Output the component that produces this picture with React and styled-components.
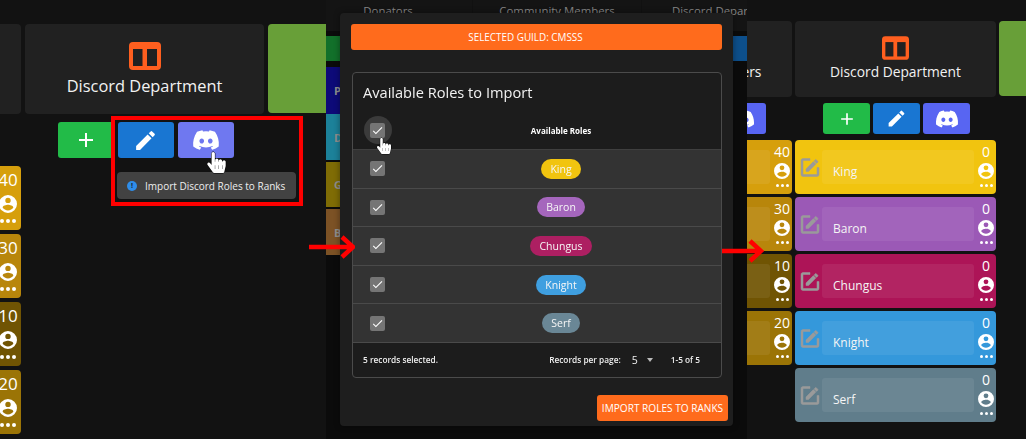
import React from "react";
import styled, { createGlobalStyle } from "styled-components";
import { FaDiscord, FaHandPointer } from "react-icons/fa";
import { MdEdit, MdAdd, MdCheck } from "react-icons/md";

const Global = createGlobalStyle`
  html, body { margin: 0; padding: 0; background: #121212; overflow: hidden; }
  #root { width: 1026px; height: 439px; }
  * { box-sizing: border-box; }
`;

const Page = styled.div`
  position: relative; width: 1026px; height: 439px; display: flex; overflow: hidden;
  font-family: "Open Sans", "Noto Sans", sans-serif; color: #fff; background: #121212;
`;

const Board = styled.section`
  width: ${p => p.$width}px; height: 100%; flex: none; display: flex; gap: ${p => p.$gap}px;
  padding-top: ${p => p.$top}px; overflow: hidden; background: #121212;
  justify-content: flex-start;
`;

const Column = styled.div`
  width: ${p => p.$visible}px; flex: none; display: flex; flex-direction: column;
  align-items: flex-end; overflow: hidden; position: relative;
`;

const ColumnInner = styled.div`
  width: ${p => p.$width}px; flex: none; display: flex; flex-direction: column; align-items: stretch;
`;

const Header = styled.div`
  height: ${p => p.$h}px; background: #212121; border-radius: 4px; display: flex; flex-direction: column;
  align-items: center; justify-content: flex-end; padding-bottom: ${p => p.$big ? 18 : 16}px;
  gap: ${p => p.$big ? 5 : 3}px;
  font-size: ${p => p.$big ? 16.4 : 13.8}px; line-height: 1.3; white-space: nowrap; color: #f2f2f2;
`;

const GreenHeader = styled.div`
  height: ${p => p.$h}px; background: #689f38; border-radius: 4px 0 0 4px; flex: none;
  width: ${p => p.$w}px;
`;

const ButtonRow = styled.div`
  display: flex; justify-content: center; gap: ${p => p.$big ? 4 : 3}px; padding-left: 2px;
  margin-top: ${p => p.$big ? 8 : 6}px; height: ${p => p.$big ? 36 : 31}px;
`;

const ActionButton = styled.div`
  width: ${p => p.$big ? 56 : 47}px; height: 100%; border-radius: 3px; background: ${p => p.$bg};
  display: flex; align-items: center; justify-content: center; color: #fff;
`;

const Ranks = styled.div`
  display: flex; flex-direction: column; gap: ${p => p.$big ? 4 : 3}px;
  margin-top: ${p => p.$gapTop ? p.$gapTop : p.$big ? 8 : 6}px;
`;

const RankCard = styled.div`
  height: ${p => p.$big ? 64 : 54}px; background: ${p => p.$bg}; border-radius: 4px; display: flex;
  align-items: stretch; position: relative;
`;

const EditSlot = styled.div`
  width: 27px; flex: none; display: flex; align-items: center; justify-content: center;
  padding-left: 3px; color: #9a9a9a;
  svg { stroke: currentColor; stroke-width: .5px; }
`;

const RankName = styled.div`
  flex: 1; margin: 10px 0; background: rgba(255,255,255,.07); border-radius: 3px; display: flex;
  align-items: center; padding: 9px 0 0 11px; font-size: 12px; color: #f5f5f5;
`;

const RankSide = styled.div`
  width: ${p => p.$big ? 26 : 22}px; flex: none; display: flex; flex-direction: column; align-items: center;
  padding-top: 3px; padding-left: ${p => p.$big ? 0 : 2}px;
  font-size: ${p => p.$big ? 17 : 14}px; line-height: ${p => p.$big ? 21 : 18}px; color: #fff;
  svg { margin-top: ${p => p.$big ? 5 : 2}px; flex: none; }
`;

const Count = styled.div`
  white-space: nowrap;
`;

const Dots = styled.div`
  display: flex; gap: 2px; margin-top: ${p => p.$big ? 6 : 5}px;
  i { display: block; width: ${p => p.$big ? 4 : 3}px; height: ${p => p.$big ? 4 : 3}px; border-radius: 50%; background: #fff; }
`;

const Backdrop = styled.section`
  width: 421px; height: 100%; flex: none; background: #0b0b0b; display: flex; flex-direction: column; overflow: hidden;
  position: relative;
`;

const TabStrip = styled.div`
  height: 31px; flex: none; background: #111; display: flex; gap: 1px; margin-left: -22px; color: #868686;
  font-size: 11.4px; line-height: 22px;
`;

const Tab = styled.div`
  width: 168px; flex: none; text-align: center; background: #141414; white-space: nowrap; overflow: hidden;
`;

const Slivers = styled.div`
  flex: 1; display: flex; justify-content: space-between; padding-top: 5px;
`;

const Sliver = styled.div`
  width: 14px; display: flex; flex-direction: column;
`;

const SliverItem = styled.div`
  height: ${p => p.$h}px; margin-bottom: ${p => p.$mb || 0}px; background: ${p => p.$bg}; color: #8f8f8f;
  display: flex; align-items: center; padding-left: 8px; font-size: 11px; font-weight: 700; overflow: hidden;
`;

const Modal = styled.div`
  position: absolute; left: 14px; top: 13px; width: 393px; height: 413px; background: #1e1e1e;
  border-radius: 4px; padding: 11px 11px 0 11px; display: flex; flex-direction: column;
  box-shadow: 0 0 6px rgba(0,0,0,.4); filter: blur(.25px);
`;

const GuildBar = styled.div`
  height: 26px; flex: none; background: #ff6b1c; border-radius: 3px; display: flex; align-items: center;
  justify-content: center; padding-right: 22px; font-size: 9.9px; font-weight: 500;
`;

const TableCard = styled.div`
  margin: 22px 0 0 1px; height: 306px; flex: none; border: 1px solid #4b4b4b; border-radius: 4px; background: #1c1c1c;
  display: flex; flex-direction: column; overflow: hidden;
`;

const TableTitle = styled.div`
  height: 38px; flex: none; padding: 9px 0 0 10px; font-size: 14.6px; font-weight: 500; line-height: 20px; color: #f2f2f2;
`;

const HeadRow = styled.div`
  height: 39px; flex: none; display: grid; grid-template-columns: 48px 1fr; align-items: center;
  font-size: 8px; font-weight: 700; text-align: center; border-bottom: 1px solid #3f3f3f;
`;

const Row = styled.div`
  height: 38.6px; flex: none; display: grid; grid-template-columns: 48px 1fr; align-items: center;
  background: #333; border-bottom: 1px solid #4a4a4a;
`;

const CheckCell = styled.div`
  display: flex; align-items: center; justify-content: center; position: relative;
  &::before {
    content: ""; display: ${p => p.$halo ? "block" : "none"}; position: absolute; left: 11px; top: 50%; margin-top: -14px;
    width: 28px; height: 28px; border-radius: 50%; background: #3b3b3b;
  }
`;

const Check = styled.div`
  width: 15px; height: 15px; border-radius: 2px; background: #757575; display: flex; align-items: center;
  justify-content: center; color: #fff; position: relative;
`;

const PillCell = styled.div`
  display: flex; justify-content: center;
`;

const Pill = styled.div`
  height: 20px; padding: 0 ${p => p.$pad || 9}px; border-radius: 10px; background: ${p => p.$bg}; display: flex;
  align-items: center; font-size: 10.5px; font-weight: 500; color: #f6f6f6;
`;

const Footer = styled.div`
  flex: 1; display: flex; align-items: center; padding: 0 21px 0 10px; font-size: 8.3px; font-weight: 600; color: #eee;
`;

const FooterSpacer = styled.div` flex: 1; `;

const PageSize = styled.span`
  margin: 0 0 0 11px; font-size: 10.5px; font-weight: 400;
`;

const Caret = styled.span`
  width: 0; height: 0; margin: 1px 18px 0 9px; border: 3.5px solid transparent; border-top: 4px solid #bbb; border-bottom: 0;
`;

const ModalActions = styled.div`
  display: flex; justify-content: flex-end; margin: 17px -6px 0 0;
`;

const ImportButton = styled.div`
  width: 131px; height: 26px; background: #ff6b1c; border-radius: 3px; display: flex; align-items: center;
  justify-content: center; font-size: 10.1px; font-weight: 500; white-space: nowrap;
`;

const Tooltip = styled.div`
  position: absolute; left: 117px; top: 172px; width: 179px; height: 27px; background: #424242; border-radius: 4px;
  display: flex; align-items: center; gap: 8px; padding-left: 10px; font-size: 10px; color: #eee;
  white-space: nowrap; z-index: 2;
`;

const InfoDot = styled.span`
  width: 10px; height: 10px; border-radius: 50%; background: #2f8eea; color: #123; font-size: 7px; font-weight: 700;
  display: flex; align-items: center; justify-content: center; line-height: 1;
`;

const RedBox = styled.div`
  position: absolute; left: 111px; top: 116px; width: 192px; height: 90px; border: 4px solid #f00; z-index: 3;
`;

const Hand = styled.div`
  position: absolute; left: ${p => p.$x}px; top: ${p => p.$y}px; z-index: 5; display: flex;
  svg { stroke: #000; stroke-width: 24px; paint-order: stroke; overflow: visible; }
`;

const Arrow = styled.svg`
  position: absolute; left: ${p => p.$x}px; top: ${p => p.$y}px; z-index: 4;
`;

const ICON_ACCOUNT = "M12,19.2C9.5,19.2 7.29,17.92 6,16C6.03,14 10,12.9 12,12.9C14,12.9 17.97,14 18,16C16.71,17.92 14.5,19.2 12,19.2M12,5A3,3 0 0,1 15,8A3,3 0 0,1 12,11A3,3 0 0,1 9,8A3,3 0 0,1 12,5M12,2A10,10 0 0,0 2,12A10,10 0 0,0 12,22A10,10 0 0,0 22,12A10,10 0 0,0 12,2Z";
const ICON_EDIT = "M5,3C3.89,3 3,3.89 3,5V19A2,2 0 0,0 5,21H19A2,2 0 0,0 21,19V12H19V19H5V5H12V3H5M17.78,4C17.61,4 17.43,4.07 17.3,4.2L16.08,5.41L18.58,7.91L19.8,6.7C20.06,6.44 20.06,6 19.8,5.75L18.25,4.2C18.12,4.07 17.95,4 17.78,4M15.37,6.12L8,13.5V16H10.5L17.87,8.62L15.37,6.12Z";

const Account = ({ size }) => (
  <svg width={size} height={size} viewBox="2 2 20 20" fill="#fff"><path d={ICON_ACCOUNT} /></svg>
);

const EditSquare = () => (
  <svg width="27" height="27" viewBox="0 0 24 24" fill="currentColor"><path d={ICON_EDIT} /></svg>
);

const Columns = ({ big }) => {
  const s = big ? 32 : 27;
  return (
    <svg width={s} height={big ? 28 : 24} viewBox="0 0 32 28">
      <rect width="32" height="28" rx="4" fill="#ff5f1f" />
      <rect x="4" y="7" width="9.5" height="17" fill="#212121" />
      <rect x="18" y="7" width="10" height="17" fill="#212121" />
    </svg>
  );
};

const Rank = ({ big, name, count, bg }) => (
  <RankCard $big={big} $bg={bg}>
    <EditSlot><EditSquare /></EditSlot>
    <RankName>{name}</RankName>
    <RankSide $big={big}>
      <Count>{count}</Count>
      <Account size={big ? 18 : 16} />
      <Dots $big={big}><i /><i /><i /></Dots>
    </RankSide>
  </RankCard>
);

const Buttons = ({ big, discordBg }) => (
  <ButtonRow $big={big}>
    <ActionButton $big={big} $bg="#22bb48"><MdAdd size={big ? 24 : 20} /></ActionButton>
    <ActionButton $big={big} $bg="#1976d2"><MdEdit size={big ? 25 : 21} /></ActionButton>
    <ActionButton $big={big} $bg={discordBg}><FaDiscord size={big ? 28 : 24} /></ActionButton>
  </ButtonRow>
);

const DeptColumn = ({ big, width, visible, title, ranks, icon, discordBg, headerH }) => (
  <Column $visible={visible}>
    <ColumnInner $width={width}>
      <Header $big={big} $h={headerH}>{icon && <Columns big={big} />}{title}</Header>
      <Buttons big={big} discordBg={discordBg} />
      <Ranks $big={big}>
        {ranks.map(r => <Rank key={r.count + r.name} big={big} {...r} />)}
      </Ranks>
    </ColumnInner>
  </Column>
);

const goldRanks = [
  { name: "", count: 40, bg: "#d69f0c" },
  { name: "", count: 30, bg: "#b8860b" },
  { name: "", count: 10, bg: "#705403" },
  { name: "", count: 20, bg: "#9b7406" },
];
const discordRanks = [
  { name: "King", count: 0, bg: "#f1c40f" },
  { name: "Baron", count: 0, bg: "#9b59b6" },
  { name: "Chungus", count: 0, bg: "#ad1457" },
  { name: "Knight", count: 0, bg: "#3498db" },
  { name: "Serf", count: 0, bg: "#607d8b" },
];
const pills = [
  { name: "King", bg: "#f1c40f" },
  { name: "Baron", bg: "#a566bd" },
  { name: "Chungus", bg: "#ad1f62" },
  { name: "Knight", bg: "#3f9fe0" },
  { name: "Serf", bg: "#6a8796" },
];

export default function App() {
  return (
    <Page>
      <Global />
      <Board $width={326} $gap={4} $top={24}>
        <Column $visible={21}>
          <ColumnInner $width={239}>
            <Header $big $h={90} />
            <Ranks $big $gapTop={52}>
              {goldRanks.map(r => <Rank key={r.count} big {...r} />)}
            </Ranks>
          </ColumnInner>
        </Column>
        <Column $visible={239}>
          <ColumnInner $width={239}>
            <Header $big $h={90}><Columns big />Discord Department</Header>
            <Buttons big discordBg="#6f78f0" />
          </ColumnInner>
        </Column>
        <GreenHeader $w={58} $h={89} />
      </Board>

      <Backdrop>
        <TabStrip>
          <Tab>Donators</Tab>
          <Tab>Community Members</Tab>
          <Tab>Discord Department</Tab>
        </TabStrip>
        <Slivers>
          <Sliver>
            <SliverItem $h={25} $mb={6} $bg="#12702a" />
            <SliverItem $h={47} $bg="#0d0a78">P</SliverItem>
            <SliverItem $h={46} $mb={2} $bg="#1c8199">D</SliverItem>
            <SliverItem $h={45} $mb={2} $bg="#7f6c05">G</SliverItem>
            <SliverItem $h={46} $bg="#7c5225">B</SliverItem>
          </Sliver>
          <Sliver>
            <SliverItem $h={25} $bg="#0d4f8b" />
          </Sliver>
        </Slivers>
        <Modal>
          <GuildBar>SELECTED GUILD: CMSSS</GuildBar>
          <TableCard>
            <TableTitle>Available Roles to Import</TableTitle>
            <HeadRow>
              <CheckCell $halo><Check><MdCheck size={13} /></Check></CheckCell>
              <div>Available Roles</div>
            </HeadRow>
            {pills.map(p => (
              <Row key={p.name}>
                <CheckCell><Check><MdCheck size={13} /></Check></CheckCell>
                <PillCell><Pill $bg={p.bg}>{p.name}</Pill></PillCell>
              </Row>
            ))}
            <Footer>
              5 records selected.
              <FooterSpacer />
              Records per page:
              <PageSize>5</PageSize>
              <Caret />
              1-5 of 5
            </Footer>
          </TableCard>
          <ModalActions><ImportButton>IMPORT ROLES TO RANKS</ImportButton></ModalActions>
        </Modal>
      </Backdrop>

      <Board $width={279} $gap={3} $top={21}>
        <DeptColumn width={201} visible={45} title="Community Members" ranks={goldRanks} discordBg="#5865f2" headerH={76} />
        <DeptColumn width={201} visible={201} title="Discord Department" ranks={discordRanks} icon discordBg="#5865f2" headerH={76} />
        <GreenHeader $w={27} $h={75} />
      </Board>

      <Tooltip><InfoDot>!</InfoDot>Import Discord Roles to Ranks</Tooltip>
      <RedBox />
      <Hand $x={206} $y={152}><FaHandPointer size={21} color="#fff" /></Hand>
      <Hand $x={376} $y={138}><FaHandPointer size={16} color="#fff" /></Hand>
      <Arrow $x={309} $y={235} width="46" height="24" viewBox="0 0 46 24"><path d="M0 12H43M33 2L44 12L33 22" fill="none" stroke="#f00" strokeWidth="4.5" /></Arrow>
      <Arrow $x={722} $y={238.5} width="42" height="24" viewBox="0 0 42 24"><path d="M0 12H39M28 2L39 12L28 22" fill="none" stroke="#f00" strokeWidth="4.5" /></Arrow>
    </Page>
  );
}
